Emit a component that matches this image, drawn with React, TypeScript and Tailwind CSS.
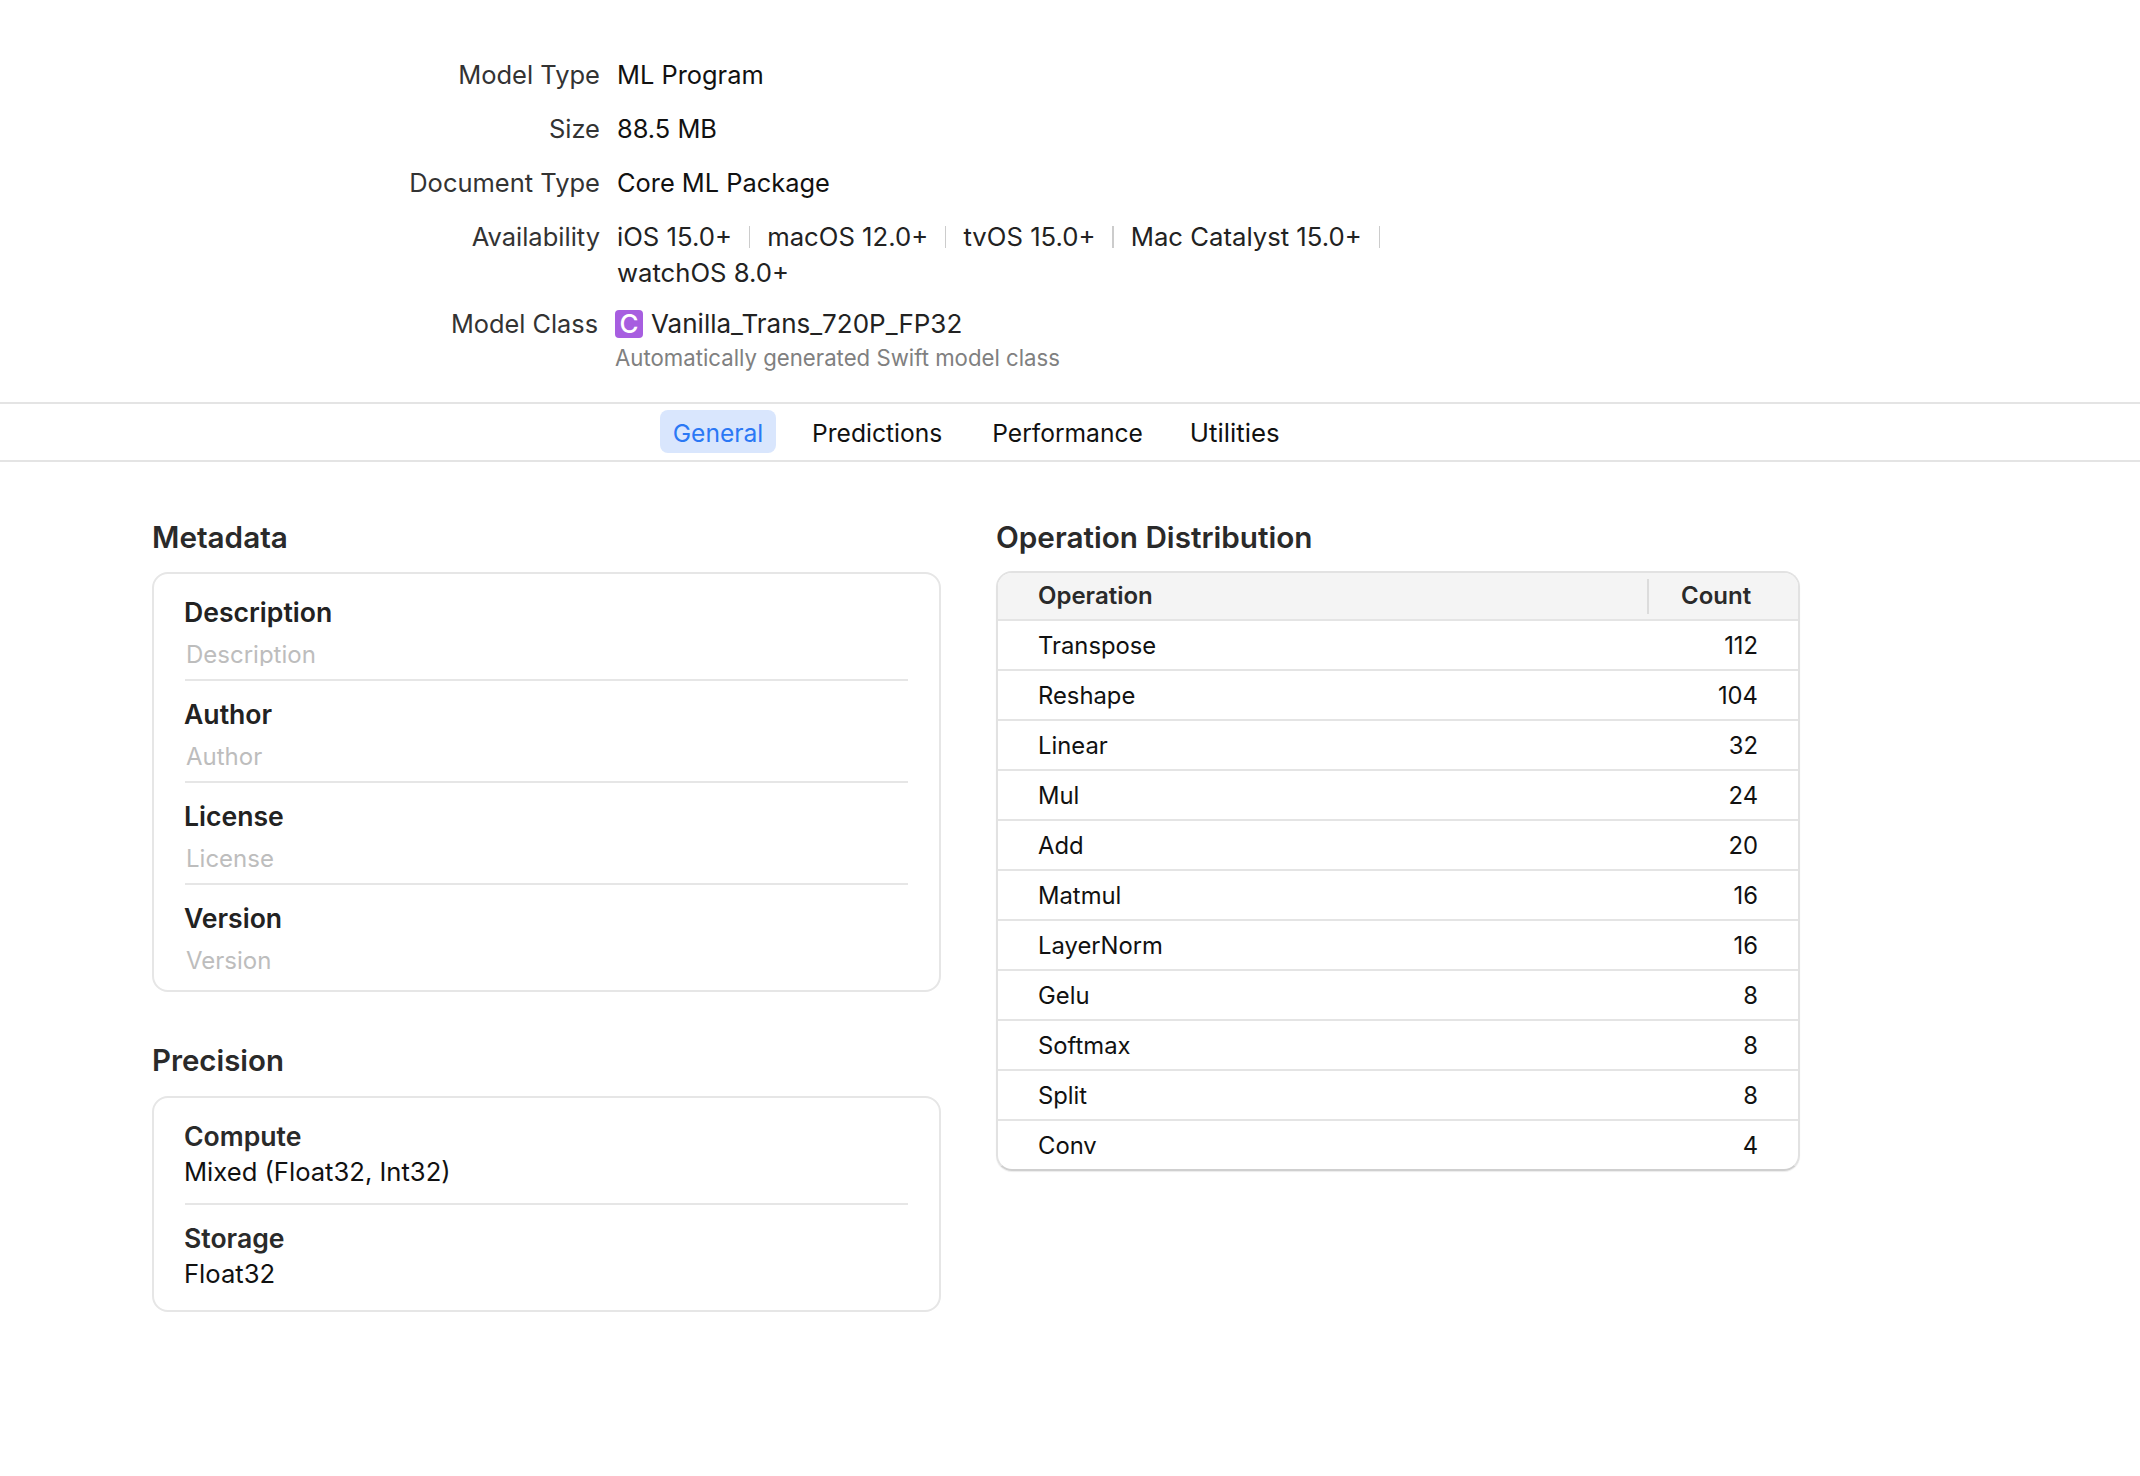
import React from 'react';

const font = { fontFamily: 'Inter, "Noto Sans", sans-serif' };

const infoRows = [
  { label: 'Model Type', value: 'ML Program' },
  { label: 'Size', value: '88.5 MB' },
  { label: 'Document Type', value: 'Core ML Package' },
];

const platforms = ['iOS 15.0+', 'macOS 12.0+', 'tvOS 15.0+', 'Mac Catalyst 15.0+'];

const operations: [string, number][] = [
  ['Transpose', 112],
  ['Reshape', 104],
  ['Linear', 32],
  ['Mul', 24],
  ['Add', 20],
  ['Matmul', 16],
  ['LayerNorm', 16],
  ['Gelu', 8],
  ['Softmax', 8],
  ['Split', 8],
  ['Conv', 4],
];

const Separator: React.FC = () => <span className="mx-[17px] inline-block h-[22px] w-[2px] bg-[#cccccc]" />;

const MetaField: React.FC<{ label: string; last?: boolean; clip?: boolean }> = ({ label, last, clip }) => (
  <div className={`${last ? 'h-[97px]' : 'h-[102px]'} pt-[17px] ${last ? '' : 'border-b-2 border-[#e6e6e6]'}`}>
    <div className="-ml-px h-[32px] text-[26.6px] leading-[32px] font-semibold text-[#222222]">{label}</div>
    <div className={`mt-[11px] ${clip ? 'h-[27px]' : 'h-[32px]'} overflow-hidden text-[24px] leading-[32px] text-[#bdbdbd] ml-px`}>{label}</div>
  </div>
);

const App: React.FC = () => {
  return (
    <div className="min-h-[1476px] w-[2140px] bg-white text-[#1d1d1f]" style={font}>
      {/* Model summary */}
      <div className="h-[402px] pt-[48px] text-[25.5px] leading-[54px]">
        {infoRows.map(row => (
          <div key={row.label} className="flex h-[54px]">
            <div className="w-[600px] text-right text-[#333333]">{row.label}</div>
            <div className="ml-[17px] text-[25.4px] text-[#111111]">{row.value}</div>
          </div>
        ))}
        <div className="flex">
          <div className="w-[600px] text-right text-[#333333]">Availability</div>
          <div className="ml-[17px] w-[780px] pt-[8px] text-[25.7px] leading-[37px] text-[#222222]">
            <div className="flex items-center whitespace-nowrap">
              {platforms.map(p => (
                <React.Fragment key={p}>
                  <span>{p}</span>
                  <Separator />
                </React.Fragment>
              ))}
            </div>
            <div className="-mt-px">watchOS 8.0+</div>
          </div>
        </div>
        <div className="mt-[13px] flex">
          <div className="w-[598px] text-right text-[25.3px] leading-[40px] text-[#333333]">Model Class</div>
          <div className="ml-[17px]">
            <div className="flex h-[40px] items-center">
              <span className="flex h-[28px] w-[28px] items-center justify-center rounded-[4px] bg-[#a75ee0] text-[26px] leading-none font-medium text-white">C</span>
              <span className="ml-[8px] text-[26px] text-[#222222]">Vanilla_Trans_720P_FP32</span>
            </div>
            <div className="mt-[1px] text-[22.2px] leading-[26px] text-[#808080]">Automatically generated Swift model class</div>
          </div>
        </div>
      </div>

      {/* Tabs */}
      <div className="flex h-[60px] items-center border-y-2 border-[#e4e4e4] pl-[660px] text-[24.6px]">
        <div className="-mt-px flex h-[43px] w-[116px] items-center justify-center rounded-[8px] bg-[#d9e6fd] pt-[3px] text-[#2b78f5]">General</div>
        <div className="ml-[36px] pt-[2px] text-[#111111]">Predictions</div>
        <div className="ml-[50px] pt-[2px] text-[#111111]">Performance</div>
        <div className="ml-[47px] pt-[2px] text-[25.8px] text-[#111111]">Utilities</div>
      </div>

      {/* Body columns */}
      <div className="flex pl-[152px] pt-[54px]">
        <div className="w-[789px]">
          <h2 className="h-[42px] text-[29.7px] leading-[42px] font-semibold text-[#2a2a2a]">Metadata</h2>
          <div className="mt-[14px] h-[420px] rounded-[16px] border-2 border-[#e6e6e6] px-[31px] pt-[5px]">
            <MetaField label="Description" clip />
            <MetaField label="Author" />
            <MetaField label="License" />
            <MetaField label="Version" last />
          </div>

          <h2 className="mt-[48px] h-[42px] text-[29.4px] leading-[42px] font-semibold text-[#2a2a2a]">Precision</h2>
          <div className="mt-[14px] h-[216px] rounded-[16px] border-2 border-[#e6e6e6] px-[31px]">
            <div className="h-[107px] border-b-2 border-[#e6e6e6] pt-[22px]">
              <div className="-ml-px text-[26.6px] leading-[32px] font-semibold text-[#2a2a2a]">Compute</div>
              <div className="-ml-px mt-[4px] text-[25.6px] leading-[32px] text-[#111111]">Mixed (Float32, Int32)</div>
            </div>
            <div className="pt-[17px]">
              <div className="-ml-px text-[26.6px] leading-[32px] font-semibold text-[#2a2a2a]">Storage</div>
              <div className="-ml-px mt-[4px] text-[25.6px] leading-[32px] text-[#111111]">Float32</div>
            </div>
          </div>
        </div>

        <div className="ml-[55px] w-[804px]">
          <h2 className="h-[42px] text-[29.7px] leading-[42px] font-semibold text-[#2a2a2a]">Operation Distribution</h2>
          <div className="mt-[13px] overflow-hidden rounded-[16px] border-2 border-[#e2e2e2] border-b-[#cfcfcf] shadow-[0_1px_1px_rgba(0,0,0,0.08)]">
            <div className="flex h-[48px] items-center border-b-2 border-[#e4e4e4] bg-[#f4f4f4] text-[24px] font-semibold text-[#2a2a2a]">
              <div className="w-[649px] pl-[40px]">Operation</div>
              <div className="h-[35px] w-[2px] bg-[#dcdcdc]" />
              <div className="pl-[32px]">Count</div>
            </div>
            {operations.map(([name, count], i) => (
              <div
                key={name}
                className={`flex items-center justify-between pl-[40px] pr-[40px] pt-[2px] text-[23.8px] text-[#111111] ${i < operations.length - 1 ? 'h-[50px] border-b-2 border-[#e4e4e4]' : 'h-[48px]'}`}
              >
                <span>{name}</span>
                <span>{count}</span>
              </div>
            ))}
          </div>
        </div>
      </div>
    </div>
  );
};

export default App;
